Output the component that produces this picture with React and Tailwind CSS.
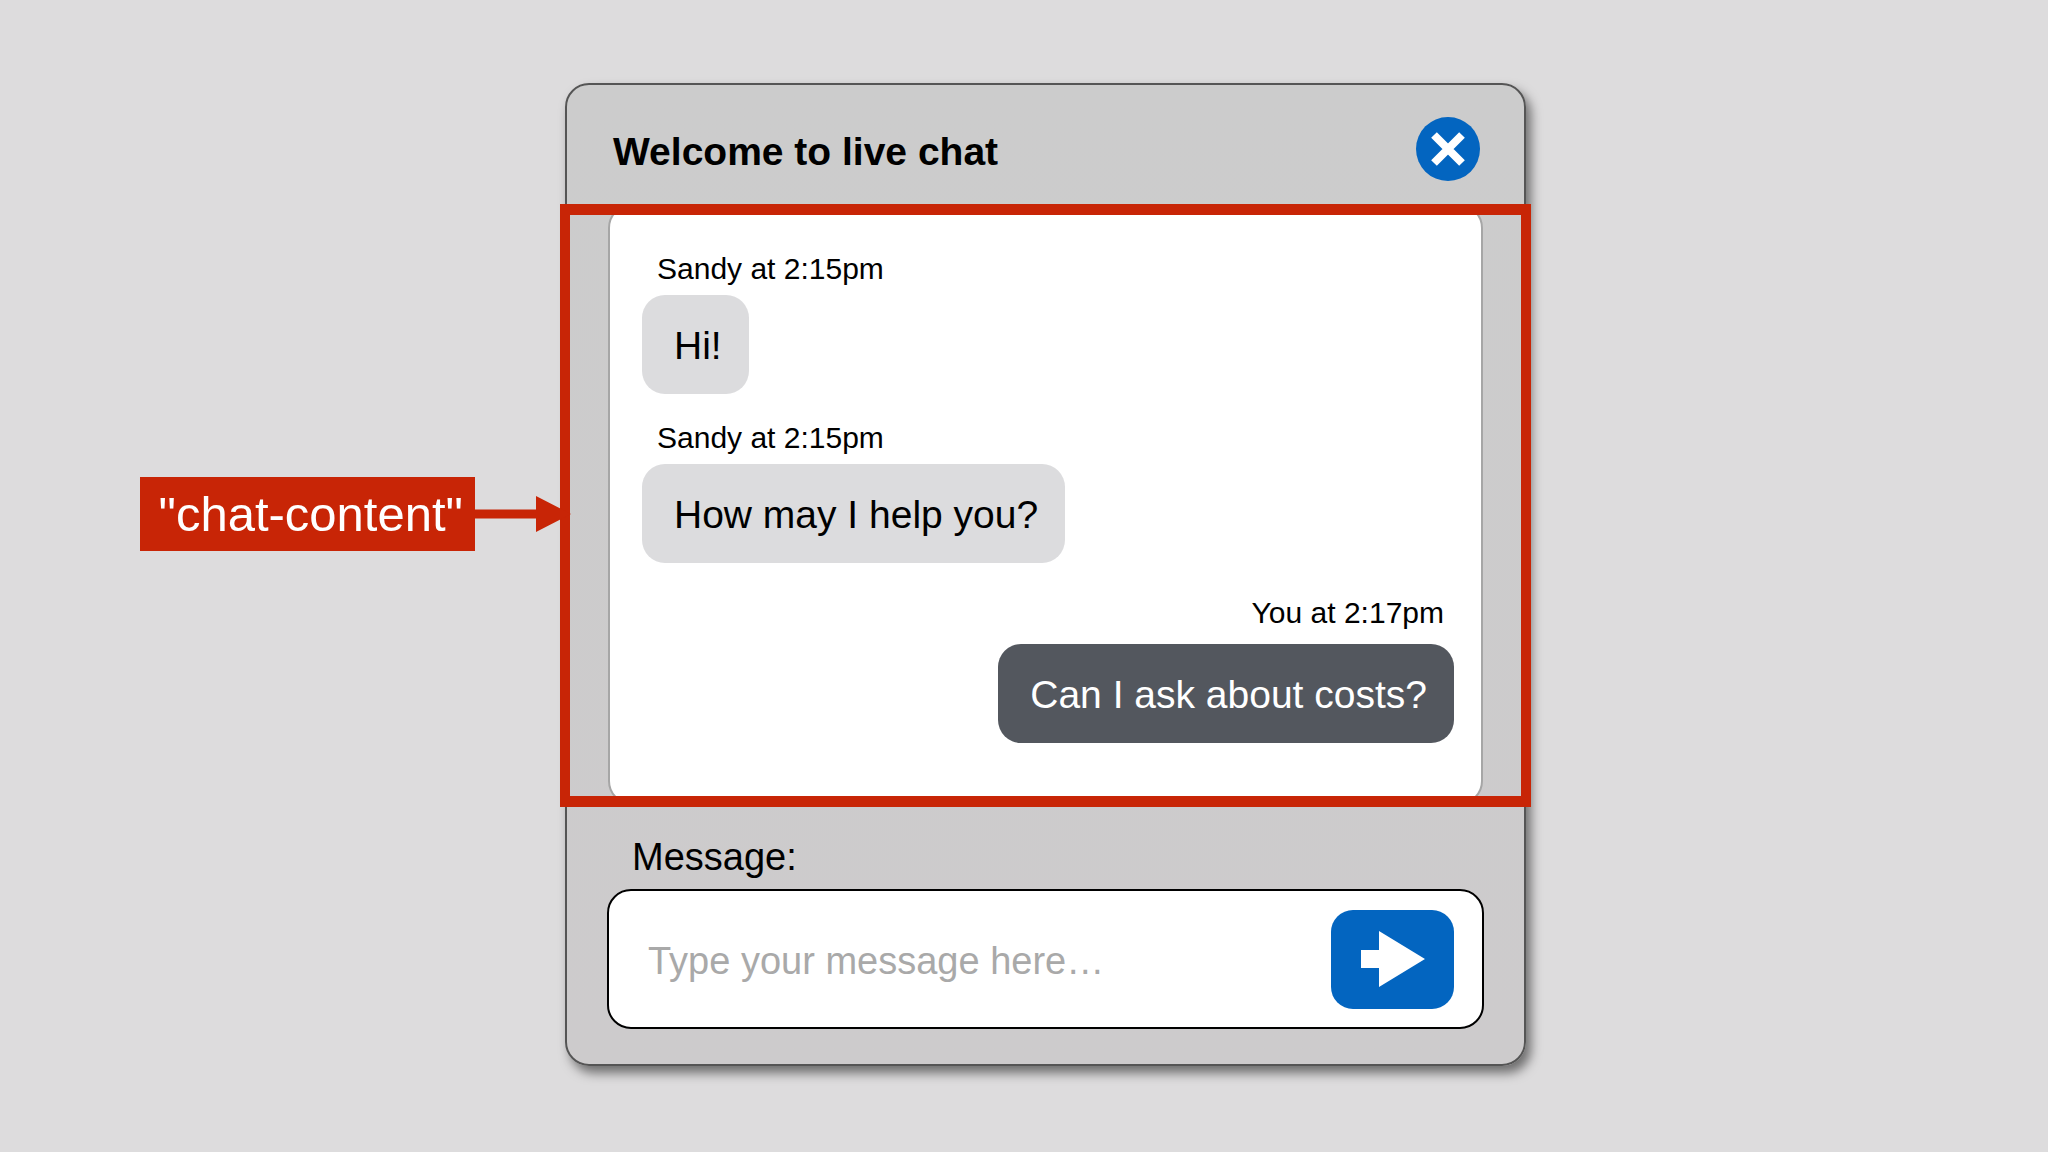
import React, { useState } from "react";

const messages = [
  { id: 1, author: "Sandy", time: "2:15pm", text: "Hi!", own: false },
  {
    id: 2,
    author: "Sandy",
    time: "2:15pm",
    text: "How may I help you?",
    own: false,
  },
  {
    id: 3,
    author: "You",
    time: "2:17pm",
    text: "Can I ask about costs?",
    own: true,
  },
];

const Callout = () => {
  return (
    <div className="relative z-10 flex items-center justify-end self-start pt-[477px]">
      <p className="bg-[#c82506] pt-[2px] pr-3 pb-[2px] pl-[19px] text-[49px] leading-[70px] text-white whitespace-nowrap">
        "chat-content"
      </p>
      <svg
        className="-mr-[6px] h-9 w-24 shrink-0"
        viewBox="0 0 96 36"
        fill="#c82506"
        aria-hidden="true"
      >
        <path d="M0 13.5H61V0L96 18L61 36V22.5H0Z" />
      </svg>
    </div>
  );
};

const ChatMessage = ({ message }) => {
  const { author, time, text, own } = message;

  return (
    <li className={own ? "mt-[6px] flex flex-col items-end" : "flex flex-col items-start"}>
      <p
        className={
          own
            ? "mb-[13px] px-[10px] text-[30px] leading-9"
            : "mb-2 px-[15px] text-[30px] leading-9"
        }
      >
        {author} at {time}
      </p>
      <p
        className={
          own
            ? "rounded-[23px] bg-[#53575e] pt-[26px] pr-[27px] pb-6 pl-8 text-[39px] leading-[49px] text-white"
            : "rounded-[23px] bg-[#dcdcde] pt-[26px] pr-[27px] pb-6 pl-8 text-[39px] leading-[49px]"
        }
      >
        {text}
      </p>
    </li>
  );
};

const App = () => {
  const [draft, setDraft] = useState("");

  const handleSubmit = (e) => {
    e.preventDefault();
    setDraft("");
  };

  return (
    <main className="grid min-h-screen grid-cols-[565fr_961fr_522fr] items-start bg-[#dddcdd] font-['Liberation_Sans',Arial,sans-serif] text-black">
      <Callout />

      <section className="mt-[83px] rounded-[24px] border-2 border-[#555] bg-linear-to-b from-[#cccccc] to-[#cdcbcc] shadow-[5px_7px_11px_rgba(0,0,0,0.5)]">
        {/* Header */}
        <header className="flex items-center justify-between pt-8 pr-11 pb-[23px] pl-[46px]">
          <h1 className="pt-[6px] text-[39px] leading-[48px] font-bold">
            Welcome to live chat
          </h1>
          <button
            type="button"
            aria-label="Close chat"
            className="flex size-16 items-center justify-center rounded-full bg-[#0365c0]"
          >
            <svg
              className="size-[36px]"
              viewBox="0 0 36 36"
              stroke="#fff"
              strokeWidth="8"
              aria-hidden="true"
            >
              <path d="M4 4L32 32M32 4L4 32" />
            </svg>
          </button>
        </header>

        {/* Conversation */}
        <div className="relative px-[41px] pb-[2px]">
          <ul className="flex flex-col gap-[26px] rounded-[24px] border-2 border-[#a6a6a6] bg-white pt-[45px] pr-[27px] pb-[60px] pl-8">
            {messages.map((message) => (
              <ChatMessage key={message.id} message={message} />
            ))}
          </ul>
          {/* Outline round the highlighted region */}
          <div className="pointer-events-none absolute inset-y-0 -inset-x-[7px] border-x-[10px] border-y-[11px] border-[#c82506]" />
        </div>

        {/* Composer */}
        <form onSubmit={handleSubmit} className="px-10 pt-[26px] pb-[35px]">
          <label
            htmlFor="message"
            className="mb-2 block pl-[25px] text-[38px] leading-[48px]"
          >
            Message:
          </label>
          <div className="flex h-[140px] items-center rounded-[24px] border-2 border-black bg-white pr-7 pl-[39px]">
            <input
              id="message"
              type="text"
              className="min-w-0 flex-1 bg-transparent pt-1 text-[38px] outline-none placeholder:text-[#a9a9a9]"
              placeholder="Type your message here…"
              value={draft}
              onChange={(e) => setDraft(e.target.value)}
            />
            <button
              type="submit"
              aria-label="Send message"
              className="flex h-[99px] w-[123px] shrink-0 items-center justify-center rounded-[22px] bg-[#0365c0]"
            >
              <svg
                className="h-14 w-16"
                viewBox="0 0 64 56"
                fill="#fff"
                aria-hidden="true"
              >
                <path d="M0 19H18V0L64 28L18 56V37H0Z" />
              </svg>
            </button>
          </div>
        </form>
      </section>
    </main>
  );
};

export default App;
